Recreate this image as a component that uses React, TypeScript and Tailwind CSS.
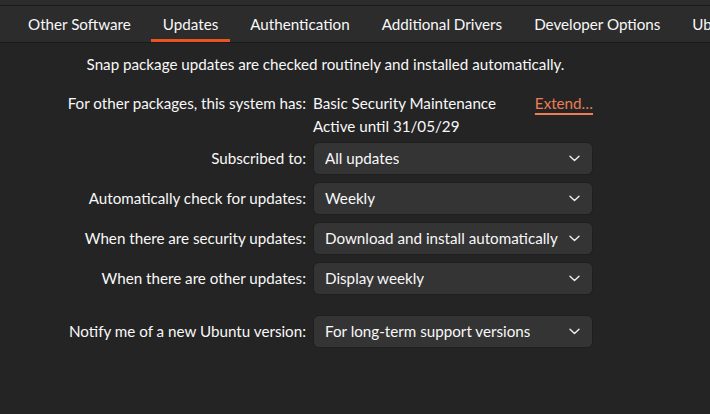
import React from "react";

const TABS = ["Other Software", "Updates", "Authentication", "Additional Drivers", "Developer Options", "Ubuntu Pro"];

const ROWS = [
  { label: "Subscribed to:", value: "All updates" },
  { label: "Automatically check for updates:", value: "Weekly" },
  { label: "When there are security updates:", value: "Download and install automatically" },
  { label: "When there are other updates:", value: "Display weekly" },
];

function Chevron() {
  return (
    <svg width="11" height="7" viewBox="0 0 11 7" className="shrink-0">
      <path d="M1 1.2 L5.5 5.5 L10 1.2" fill="none" stroke="#ededed" strokeWidth="1.4" strokeLinecap="round" strokeLinejoin="round" />
    </svg>
  );
}

function Combo({ value }: { value: string }) {
  return (
    <div className="flex h-[33px] w-[280px] items-center justify-between gap-1 rounded-[6px] border border-[#1f1f1f] bg-[#343434] pl-[11px] pr-[12px]">
      <span className="truncate whitespace-nowrap">{value}</span>
      <Chevron />
    </div>
  );
}

function Row({ label, value, className = "" }: { label: string; value: string; className?: string }) {
  return (
    <div className={`flex items-center gap-[7px] ${className}`}>
      <div className="w-[248px] text-right whitespace-nowrap">{label}</div>
      <Combo value={value} />
    </div>
  );
}

export default function App() {
  return (
    <div
      className="h-[414px] w-[710px] overflow-hidden bg-[#242424] text-[15.2px] text-[#f8f8f8]"
      style={{ fontFamily: "Lato, 'Noto Sans', sans-serif" }}
    >
      <div className="h-[6px] border-b border-[#1b1b1b] bg-[#2c2c2c]" />
      <div className="flex h-[37px] overflow-hidden border-b border-[#1b1b1b] bg-[#2c2c2c] pl-3 whitespace-nowrap">
        {TABS.map((tab) => (
          <div key={tab} className="relative flex h-full shrink-0 items-center px-4">
            {tab}
            {tab === "Updates" && <div className="absolute bottom-0 left-1 right-1 h-[3px] bg-[#e95420]" />}
          </div>
        ))}
      </div>

      <div className="ml-[58px] w-[535px] pt-[11px]">
        <div className="text-center leading-[20px] whitespace-nowrap">
          Snap package updates are checked routinely and installed automatically.
        </div>

        <div className="mt-[18px] flex gap-[7px] leading-[23px]">
          <div className="w-[248px] text-right whitespace-nowrap">For other packages, this system has:</div>
          <div className="flex-1">
            <div className="flex justify-between whitespace-nowrap">
              <span>Basic Security Maintenance</span>
              <span className="text-[#ec7d56] underline decoration-2 underline-offset-[4px]">Extend…</span>
            </div>
            <div>Active until 31/05/29</div>
          </div>
        </div>

        <div className="mt-[4px] flex flex-col gap-[7px]">
          {ROWS.map((r) => (
            <Row key={r.label} label={r.label} value={r.value} />
          ))}
        </div>
        <Row className="mt-[20px]" label="Notify me of a new Ubuntu version:" value="For long-term support versions" />
      </div>
    </div>
  );
}
